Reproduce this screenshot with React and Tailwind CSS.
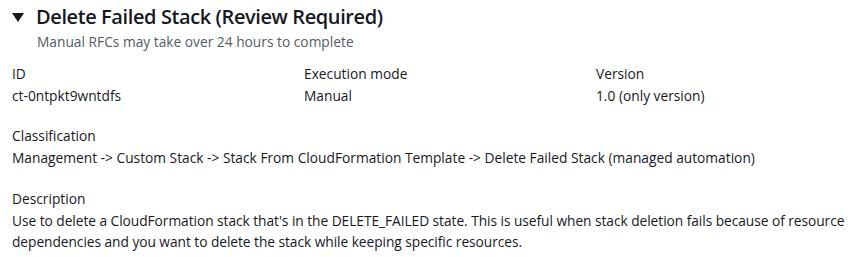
export default function App() {
  const font = { fontFamily: '"Open Sans", "Noto Sans", sans-serif' }
  return (
    <div className="bg-white text-[#16191f] w-[859px] h-[257px] pl-3 pr-[8px] pt-[4px]" style={font}>
      {/* Header */}
      <div className="flex items-center gap-[12px]">
        <svg width="12" height="12" viewBox="0 0 12 12" className="shrink-0">
          <polygon points="0,2 12,2 6,11" fill="#16191f" />
        </svg>
        <h2 className="text-[20px] leading-[26px] font-semibold tracking-[-0.4px]">Delete Failed Stack (Review Required)</h2>
      </div>
      <p className="ml-[25px] mt-[1px] text-[13.75px] leading-[22px] text-[#545b64]">Manual RFCs may take over 24 hours to complete</p>

      {/* Key values */}
      <div className="grid grid-cols-[292px_292px_1fr] mt-[10px] text-[13.75px] leading-[22px]">
        <div>
          <div>ID</div>
          <div>ct-0ntpkt9wntdfs</div>
        </div>
        <div>
          <div>Execution mode</div>
          <div>Manual</div>
        </div>
        <div>
          <div>Version</div>
          <div>1.0 (only version)</div>
        </div>
      </div>

      <div className="mt-[18px] text-[13.75px] leading-[22px]">
        <div>Classification</div>
        <div>Management -&gt; Custom Stack -&gt; Stack From CloudFormation Template -&gt; Delete Failed Stack (managed automation)</div>
      </div>

      <div className="mt-[19px] text-[13.75px] leading-[21px]">
        <div className="leading-[22px]">Description</div>
        <div className="tracking-[-0.05px]">
          Use to delete a CloudFormation stack that's in the DELETE_FAILED state. This is useful when stack deletion fails because of resource dependencies and you want to delete the stack while keeping specific resources.
        </div>
      </div>
    </div>
  )
}
